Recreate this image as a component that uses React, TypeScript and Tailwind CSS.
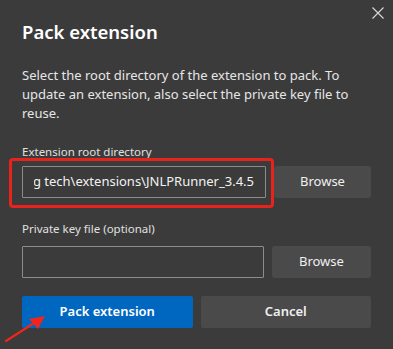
import React from 'react';

const font = { fontFamily: '"Segoe UI", "Noto Sans", "Open Sans", sans-serif' };

export default function App() {
    return (
        <div className="relative w-[393px] h-[349px] bg-[#3b3b3b] overflow-hidden text-white" style={font}>
            {/* Close */}
            <button className="absolute top-[7px] right-[9px] w-[12px] h-[12px]">
                <svg viewBox="0 0 12 12" className="w-[12px] h-[12px]" fill="none" stroke="#d8d8d8" strokeWidth="1.1">
                    <path d="M0.5 0.5 L11.5 11.5 M11.5 0.5 L0.5 11.5" />
                </svg>
            </button>

            <div className="px-[22px] pt-[19px]">
                <h1 className="text-[18.5px] leading-[26px] font-semibold text-white">Pack extension</h1>

                <p className="mt-[21px] text-[13px] leading-[19px] text-[#e6e6e6] pr-[20px]">
                    Select the root directory of the extension to pack. To update an extension, also select the private key file to reuse.
                </p>

                {/* Root directory */}
                <label className="block mt-[21px] text-[11.5px] leading-[16px] text-[#e0e0e0]">Extension root directory</label>
                <div className="mt-[6px] flex gap-[8px]">
                    <div className="relative w-[244px] h-[32px]">
                        <div className="absolute -left-[13px] -top-[8px] w-[265px] h-[50px] border-[3px] border-[#e8231c] rounded-[4px]" />
                        <div className="w-full h-full border border-[#8c8c8c] rounded-[1px] px-[11px] flex items-center">
                            <div className="flex-1 overflow-hidden flex justify-end whitespace-nowrap text-[13px] text-[#f2f2f2]">
                                <span>C:\Users\user\Documents\working tech\extensions\JNLPRunner_3.4.5</span>
                            </div>
                        </div>
                    </div>
                    <button className="w-[100px] h-[32px] bg-[#4a4a4a] rounded-[3px] text-[13px] text-[#f0f0f0]">Browse</button>
                </div>

                {/* Private key */}
                <label className="block mt-[23px] text-[11.5px] leading-[16px] text-[#e0e0e0]">Private key file (optional)</label>
                <div className="mt-[9px] flex gap-[8px]">
                    <div className="w-[244px] h-[32px] border border-[#8c8c8c] rounded-[1px]" />
                    <button className="w-[100px] h-[32px] bg-[#4a4a4a] rounded-[3px] text-[13px] text-[#f0f0f0]">Browse</button>
                </div>

                {/* Actions */}
                <div className="mt-[18px] flex gap-[8px]">
                    <button className="w-[172px] h-[32px] bg-[#0067c0] rounded-[2px] text-[13px] font-semibold text-white">Pack extension</button>
                    <button className="w-[172px] h-[32px] bg-[#4a4a4a] rounded-[2px] text-[13px] font-semibold text-[#f0f0f0]">Cancel</button>
                </div>
            </div>

            {/* Annotation arrow */}
            <svg className="absolute left-0 top-[310px] w-[50px] h-[39px]" viewBox="0 0 50 39">
                <path d="M6 31 L34 13" stroke="#f0261c" strokeWidth="2.2" strokeLinecap="round" />
                <path d="M45 6 L29 9 L38 19 Z" fill="#f0261c" />
            </svg>
        </div>
    );
}
